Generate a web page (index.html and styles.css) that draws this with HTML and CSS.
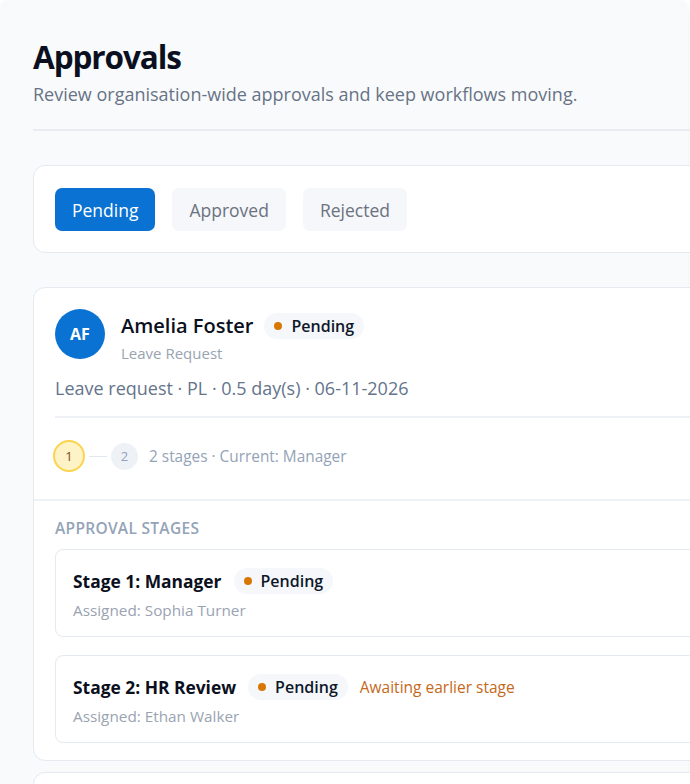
FILE: index.html
```html
<!DOCTYPE html>
<html lang="en">
<head>
<meta charset="utf-8">
<title>Approvals</title>
<link rel="stylesheet" href="styles.css">
</head>
<body>
<div class="panel">
  <header class="page-head">
    <h1 class="page-title">Approvals</h1>
    <p class="page-sub">Review organisation-wide approvals and keep workflows moving.</p>
  </header>

  <section class="tabs-card">
    <button class="tab tab-active">Pending</button>
    <button class="tab">Approved</button>
    <button class="tab">Rejected</button>
  </section>

  <div class="card-list">
    <article class="approval-card">
      <div class="card-main">
        <div class="who">
          <div class="avatar">AF</div>
          <div class="who-text">
            <div class="name-row">
              <span class="name">Amelia Foster</span>
              <span class="pill"><span class="dot"></span>Pending</span>
            </div>
            <div class="req-type">Leave Request</div>
          </div>
        </div>
        <p class="summary">Leave request · PL · 0.5 day(s) · 06-11-2026</p>
        <div class="stepper">
          <span class="step step-current">1</span>
          <span class="step-line"></span>
          <span class="step">2</span>
          <span class="step-text">2 stages · Current: Manager</span>
        </div>
      </div>
      <div class="stages">
        <h3 class="stages-title">Approval stages</h3>
        <div class="stage">
          <div class="stage-row">
            <span class="stage-name">Stage 1: Manager</span>
            <span class="pill"><span class="dot"></span>Pending</span>
          </div>
          <div class="stage-assigned">Assigned: Sophia Turner</div>
        </div>
        <div class="stage">
          <div class="stage-row">
            <span class="stage-name">Stage 2: HR Review</span>
            <span class="pill"><span class="dot"></span>Pending</span>
            <span class="awaiting">Awaiting earlier stage</span>
          </div>
          <div class="stage-assigned">Assigned: Ethan Walker</div>
        </div>
      </div>
    </article>
    <article class="approval-card approval-card-next"></article>
  </div>
</div>
</body>
</html>
```

FILE: styles.css
```css
* { box-sizing: border-box; }
html, body {
  margin: 0;
  padding: 0;
  overflow: hidden;
  background: #ffffff;
  height: 784px;
}
body {
  font-family: "Open Sans", "Noto Sans", sans-serif;
  color: #0f172a;
}
.panel {
  width: 688px;
  min-height: 800px;
  background: #f8fafc;
  border-radius: 16px 16px 0 0;
  box-shadow: 0 0 8px rgba(15, 23, 42, 0.07);
  padding: 37px 0 0 33px;
}
.page-head {
  width: 720px;
  border-bottom: 2px solid #e8ecf2;
  padding-bottom: 22px;
}
.page-title {
  margin: 0;
  font-size: 31.5px;
  line-height: 40px;
  font-weight: 700;
  letter-spacing: -1.1px;
  color: #0b1020;
}
.page-sub {
  margin: 4px 0 0;
  font-size: 18px;
  line-height: 26px;
  color: #687385;
}
.tabs-card {
  margin-top: 34px;
  width: 720px;
  background: #ffffff;
  border: 1px solid #e5e9f0;
  border-radius: 12px;
  padding: 22px 21px 21px;
  display: flex;
  gap: 17px;
}
.tab {
  font-family: inherit;
  font-size: 17.5px;
  height: 43px;
  padding: 0 17px;
  border: none;
  border-radius: 7px;
  background: #f5f7fa;
  color: #6b7280;
  cursor: pointer;
}
.tab-active {
  background: #0a72d3;
  color: #ffffff;
}
.card-list {
  margin-top: 34px;
  display: flex;
  flex-direction: column;
  gap: 11px;
  width: 720px;
}
.approval-card {
  background: #ffffff;
  border: 1px solid #e5e9f0;
  border-radius: 12px;
}
.approval-card-next {
  height: 60px;
}
.card-main {
  padding: 21px 21px 0;
}
.who {
  display: flex;
  align-items: flex-start;
  gap: 16px;
}
.avatar {
  width: 50px;
  height: 50px;
  border-radius: 50%;
  background: #0a72d3;
  color: #ffffff;
  font-weight: 700;
  font-size: 16px;
  display: flex;
  align-items: center;
  justify-content: center;
}
.who-text {
  padding-top: 3px;
}
.name-row {
  display: flex;
  align-items: center;
  gap: 11px;
}
.name {
  font-size: 20px;
  font-weight: 600;
  color: #0b1020;
  line-height: 28px;
}
.pill {
  display: inline-flex;
  align-items: center;
  gap: 9px;
  height: 26px;
  padding: 0 10px 0 10px;
  border-radius: 13px;
  background: #f5f7fa;
  font-size: 16px;
  font-weight: 600;
  color: #0f172a;
}
.dot {
  width: 8px;
  height: 8px;
  border-radius: 50%;
  background: #d97706;
}
.req-type {
  margin-top: 2px;
  font-size: 15px;
  color: #9aa3b2;
  line-height: 22px;
}
.summary {
  margin: 11px 0 0;
  font-size: 18px;
  line-height: 26px;
  color: #64748b;
  padding-bottom: 15px;
  border-bottom: 2px solid #eef1f5;
}
.stepper {
  display: flex;
  align-items: center;
  height: 81px;
  padding-bottom: 5px;
}
.step {
  width: 27px;
  height: 27px;
  border-radius: 50%;
  background: #eef2f7;
  color: #94a3b8;
  font-size: 13px;
  display: flex;
  align-items: center;
  justify-content: center;
}
.step-current {
  width: 32px;
  height: 32px;
  margin-left: -2px;
  background: #fef3c7;
  border: 2px solid #fcd34d;
  color: #7c4a12;
}
.step-line {
  width: 18px;
  height: 1px;
  background: #e2e8f0;
  margin: 0 4px;
}
.step-text {
  margin-left: 11px;
  font-size: 15.4px;
  color: #94a3b8;
}
.stages {
  border-top: 2px solid #eef1f5;
  padding: 16px 21px 17px;
}
.stages-title {
  margin: 0 0 10px;
  font-size: 15.5px;
  font-weight: 600;
  letter-spacing: 0.3px;
  text-transform: uppercase;
  color: #94a3b8;
  line-height: 22px;
}
.stage {
  border: 1px solid #e5e9f0;
  border-radius: 8px;
  padding: 18px 17px 16px;
  height: 88px;
}
.stage + .stage {
  margin-top: 18px;
}
.stage-row {
  display: flex;
  align-items: center;
  gap: 12px;
}
.stage-name {
  font-size: 17.4px;
  font-weight: 700;
  color: #0b1020;
}
.awaiting {
  margin-left: 0;
  font-size: 15.5px;
  color: #c4691b;
}
.stage-assigned {
  margin-top: 6px;
  font-size: 15.3px;
  color: #9aa3b2;
}
```
